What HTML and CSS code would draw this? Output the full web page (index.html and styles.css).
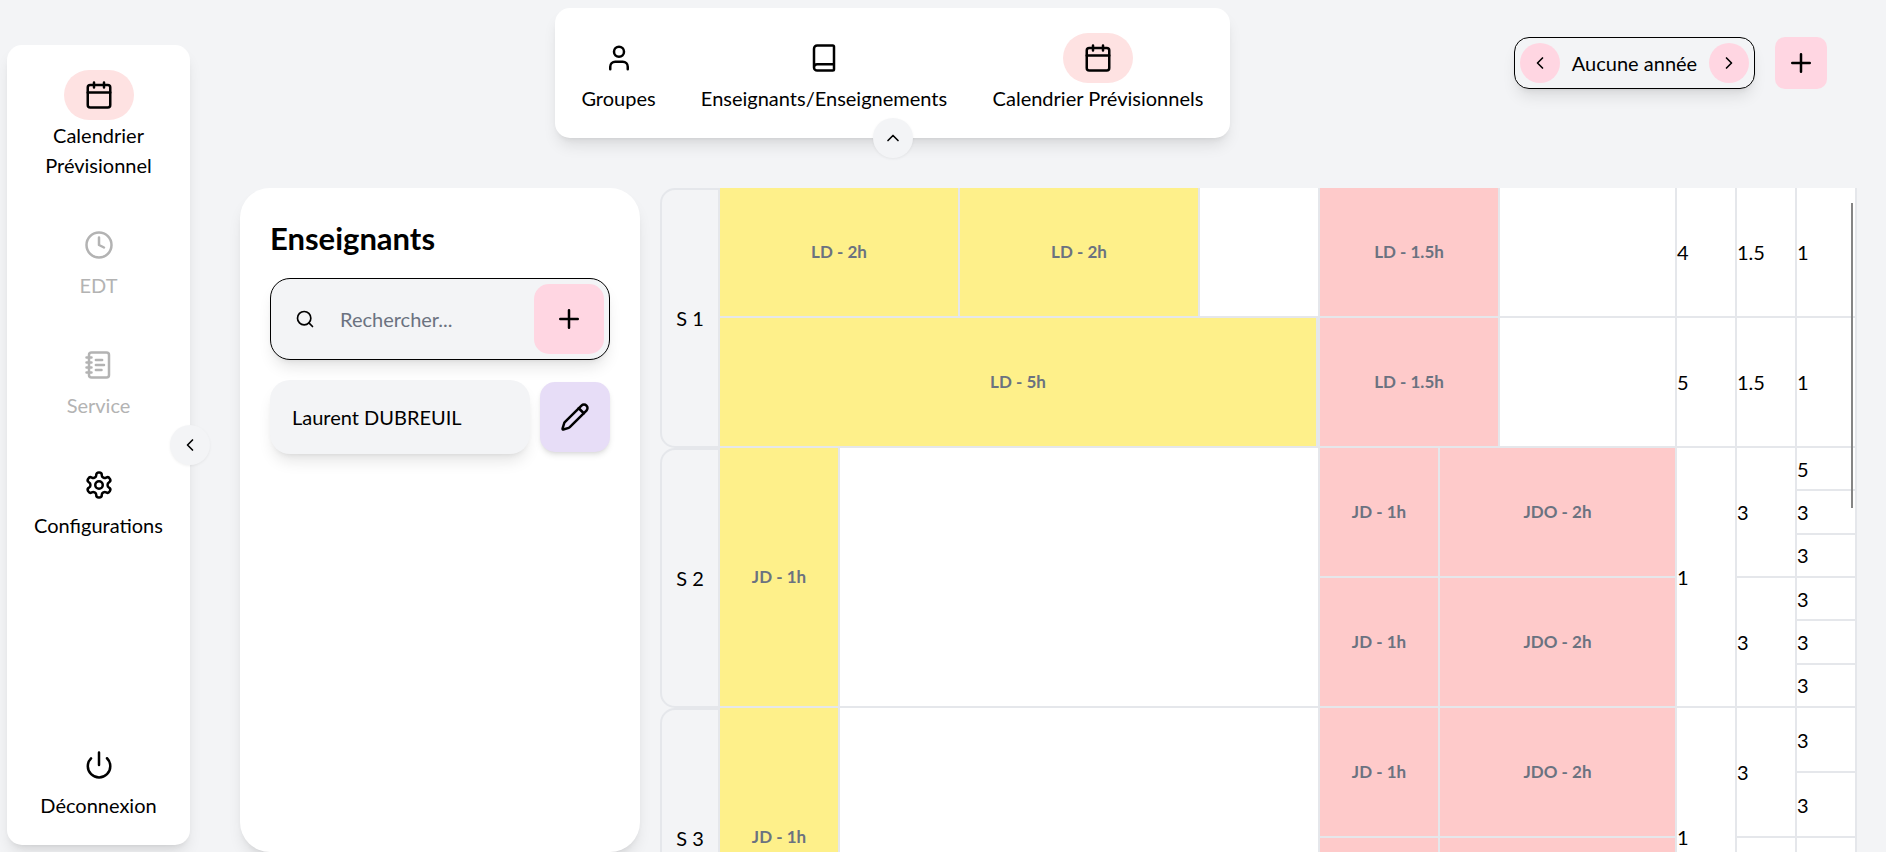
FILE: index.html
```html
<!DOCTYPE html>
<html lang="fr">
<head>
<meta charset="utf-8">
<meta name="viewport" content="width=device-width, initial-scale=1">
<title>Calendrier Prévisionnels</title>
<link rel="stylesheet" href="styles.css">
</head>
<body>
<svg class="sprite" aria-hidden="true">
  <symbol id="calendar" viewBox="0 0 24 24"><path d="M8 2v4M16 2v4M3 10h18"/><rect width="18" height="18" x="3" y="4" rx="2"/></symbol>
  <symbol id="clock" viewBox="0 0 24 24"><circle cx="12" cy="12" r="10"/><path d="M12 6v6l4 2"/></symbol>
  <symbol id="notebook" viewBox="0 0 24 24"><path d="M2 6h4M2 10h4M2 14h4M2 18h4M9.500 8h5M9.500 12H16M9.500 16H14"/><rect width="16" height="20" x="4" y="2" rx="2"/></symbol>
  <symbol id="settings" viewBox="0 0 24 24"><path d="M12.220 2h-.44a2 2 0 0 0-2 2v.18a2 2 0 0 1-1 1.730l-.43.25a2 2 0 0 1-2 0l-.15-.08a2 2 0 0 0-2.730.73l-.22.38a2 2 0 0 0 .73 2.730l.15.1a2 2 0 0 1 1 1.720v.51a2 2 0 0 1-1 1.740l-.15.09a2 2 0 0 0-.73 2.730l.22.38a2 2 0 0 0 2.730.73l.15-.08a2 2 0 0 1 2 0l.43.25a2 2 0 0 1 1 1.730V20a2 2 0 0 0 2 2h.44a2 2 0 0 0 2-2v-.18a2 2 0 0 1 1-1.730l.43-.25a2 2 0 0 1 2 0l.15.08a2 2 0 0 0 2.730-.73l.22-.39a2 2 0 0 0-.73-2.730l-.15-.08a2 2 0 0 1-1-1.740v-.5a2 2 0 0 1 1-1.740l.15-.09a2 2 0 0 0 .73-2.730l-.22-.38a2 2 0 0 0-2.730-.73l-.15.08a2 2 0 0 1-2 0l-.43-.25a2 2 0 0 1-1-1.730V4a2 2 0 0 0-2-2z"/><circle cx="12" cy="12" r="3"/></symbol>
  <symbol id="power" viewBox="0 0 24 24"><path d="M12 2v10M18.400 6.600a9 9 0 1 1-12.770.04"/></symbol>
  <symbol id="user" viewBox="0 0 24 24"><path d="M19 21v-2a4 4 0 0 0-4-4H9a4 4 0 0 0-4 4v2"/><circle cx="12" cy="7" r="4"/></symbol>
  <symbol id="book" viewBox="0 0 24 24"><path d="M4 19.500v-15A2.500 2.500 0 0 1 6.500 2H19a1 1 0 0 1 1 1v18a1 1 0 0 1-1 1H6.500a1 1 0 0 1 0-5H20"/></symbol>
  <symbol id="plus" viewBox="0 0 24 24"><path d="M5 12h14M12 5v14"/></symbol>
  <symbol id="left" viewBox="0 0 24 24"><path d="m15 18-6-6 6-6"/></symbol>
  <symbol id="right" viewBox="0 0 24 24"><path d="m9 18 6-6-6-6"/></symbol>
  <symbol id="up" viewBox="0 0 24 24"><path d="m18 15-6-6-6 6"/></symbol>
  <symbol id="search" viewBox="0 0 24 24"><circle cx="11" cy="11" r="8"/><path d="m21 21-4.300-4.300"/></symbol>
  <symbol id="pencil" viewBox="0 0 24 24"><path d="M21.174 6.812a1 1 0 0 0-3.986-3.987L3.842 16.174a2 2 0 0 0-.5.83l-1.321 4.352a.5.5 0 0 0 .623.622l4.353-1.320a2 2 0 0 0 .83-.497z"/><path d="m15 5 4 4"/></symbol>
</svg>

<aside class="sidebar">
  <nav class="side-nav" aria-label="Navigation principale">
    <a class="nav-item active" href="#"><span class="pill"><svg class="icon"><use href="#calendar"/></svg></span>Calendrier Prévisionnel</a>
    <a class="nav-item disabled" href="#" aria-disabled="true"><span class="pill"><svg class="icon"><use href="#clock"/></svg></span>EDT</a>
    <a class="nav-item disabled" href="#" aria-disabled="true"><span class="pill"><svg class="icon"><use href="#notebook"/></svg></span>Service</a>
    <a class="nav-item" href="#"><span class="pill"><svg class="icon"><use href="#settings"/></svg></span>Configurations</a>
  </nav>
  <a class="nav-item" href="#"><span class="pill"><svg class="icon"><use href="#power"/></svg></span>Déconnexion</a>
  <button class="round toggle toggle-side" aria-label="Replier le menu"><svg class="icon small"><use href="#left"/></svg></button>
</aside>

<div class="page">
  <header class="header">
    <nav class="top-nav" aria-label="Sections">
      <a class="nav-item" href="#"><span class="pill"><svg class="icon"><use href="#user"/></svg></span>Groupes</a>
      <a class="nav-item" href="#"><span class="pill"><svg class="icon"><use href="#book"/></svg></span>Enseignants/Enseignements</a>
      <a class="nav-item active" href="#"><span class="pill"><svg class="icon"><use href="#calendar"/></svg></span>Calendrier Prévisionnels</a>
      <button class="round toggle toggle-top" aria-label="Replier la barre"><svg class="icon small"><use href="#up"/></svg></button>
    </nav>
    <div class="year">
      <div class="year-picker">
        <button class="round pink" aria-label="Année précédente"><svg class="icon small"><use href="#left"/></svg></button>
        <span class="year-name">Aucune année</span>
        <button class="round pink" aria-label="Année suivante"><svg class="icon small"><use href="#right"/></svg></button>
      </div>
      <button class="year-add pink" aria-label="Ajouter une année"><svg class="icon"><use href="#plus"/></svg></button>
    </div>
  </header>

  <main class="content">
    <section class="teachers">
      <h1 class="title">Enseignants</h1>
      <div class="search">
        <label class="search-label" for="q"><svg class="icon small" role="img" aria-label="Rechercher"><use href="#search"/></svg></label>
        <input class="search-input" id="q" type="text" placeholder="Rechercher...">
        <button class="square pink" aria-label="Ajouter un enseignant"><svg class="icon"><use href="#plus"/></svg></button>
      </div>
      <div class="teacher">
        <div class="teacher-name">Laurent DUBREUIL</div>
        <button class="square violet" aria-label="Modifier Laurent DUBREUIL"><svg class="icon"><use href="#pencil"/></svg></button>
      </div>
    </section>

    <section class="planning" aria-label="Planning par semaine">
      <div class="weeks">
        <div class="week">
          <div class="week-label">S 1</div>
          <div class="col">
            <div class="row five"><div class="slot yellow span2">LD - 2h</div><div class="slot yellow span2">LD - 2h</div></div>
            <div class="row five"><div class="slot yellow span5">LD - 5h</div></div>
          </div>
          <div class="col">
            <div class="row six"><div class="slot rose span3">LD - 1.5h</div></div>
            <div class="row six"><div class="slot rose span3">LD - 1.5h</div></div>
          </div>
          <div class="col"><div class="total">4</div><div class="total">5</div></div>
          <div class="col"><div class="total">1.5</div><div class="total">1.5</div></div>
          <div class="col"><div class="total">1</div><div class="total">1</div></div>
        </div>
        <div class="week">
          <div class="week-label">S 2</div>
          <div class="col">
            <div class="row five"><div class="slot yellow">JD - 1h</div></div>
          </div>
          <div class="col">
            <div class="row six"><div class="slot rose span2">JD - 1h</div><div class="slot rose last span4">JDO - 2h</div></div>
            <div class="row six"><div class="slot rose span2">JD - 1h</div><div class="slot rose last span4">JDO - 2h</div></div>
          </div>
          <div class="col"><div class="total">1</div></div>
          <div class="col"><div class="total">3</div><div class="total">3</div></div>
          <div class="col"><div class="total">5</div><div class="total">3</div><div class="total">3</div><div class="total">3</div><div class="total">3</div><div class="total">3</div></div>
        </div>
        <div class="week">
          <div class="week-label">S 3</div>
          <div class="col">
            <div class="row five"><div class="slot yellow">JD - 1h</div></div>
          </div>
          <div class="col">
            <div class="row six"><div class="slot rose span2">JD - 1h</div><div class="slot rose last span4">JDO - 2h</div></div>
            <div class="row six"><div class="slot rose span2"></div><div class="slot rose last span4"></div></div>
          </div>
          <div class="col"><div class="total">1</div></div>
          <div class="col"><div class="total">3</div><div class="total"></div></div>
          <div class="col"><div class="total">3</div><div class="total">3</div><div class="total"></div><div class="total"></div></div>
        </div>
      </div>
      <div class="scroll-thumb"></div>
    </section>
  </main>
</div>
</body>
</html>
```

FILE: styles.css
```css
:root {
  --bg: #f3f4f6;
  --line: #e5e7eb;
  --pink: #ffd6e2;
  --shadow: 0 10px 15px -3px rgba(0, 0, 0, 0.1), 0 4px 6px -4px rgba(0, 0, 0, 0.1);
  --shadow-small: 0 1px 3px rgba(0, 0, 0, 0.06);
}

* { box-sizing: border-box; }

body {
  margin: 0;
  height: 100vh;
  display: flex;
  overflow: hidden;
  background: var(--bg);
  color: #000;
  font-family: Lato, "Open Sans", sans-serif;
  font-size: 20px;
  line-height: 30px;
}

button {
  display: flex;
  align-items: center;
  justify-content: center;
  flex: none;
  padding: 0;
  border: 0;
  color: inherit;
  font: inherit;
  cursor: pointer;
}

.sprite { display: none; }

.icon {
  width: 30px;
  height: 30px;
  display: block;
  fill: none;
  stroke: currentColor;
  stroke-width: 2;
  stroke-linecap: round;
  stroke-linejoin: round;
}

.small { width: 20px; height: 20px; }
.pink { background: var(--pink); }
.violet { background: #e7ddf7; box-shadow: 0 4px 6px -1px rgba(0, 0, 0, 0.1), 0 2px 4px -2px rgba(0, 0, 0, 0.1); }
.round { width: 40px; height: 40px; border-radius: 50%; }

/* Navigation */
.sidebar {
  position: relative;
  flex: none;
  width: 183px;
  margin: 45px 0 7px 7px;
  padding: 25px 20px;
  display: flex;
  flex-direction: column;
  justify-content: space-between;
  background: #fff;
  border-radius: 15px;
  box-shadow: var(--shadow);
}

.side-nav { display: flex; flex-direction: column; gap: 40px; }

.nav-item {
  display: flex;
  flex-direction: column;
  align-items: center;
  color: inherit;
  text-align: center;
  text-decoration: none;
}

.disabled { color: #b3b3b3; }

.pill {
  width: 70px;
  height: 50px;
  display: flex;
  align-items: center;
  justify-content: center;
  border-radius: 25px;
}

.active .pill { background: #fee2e2; }

.toggle { position: absolute; background: var(--bg); box-shadow: var(--shadow-small); }
.toggle-side { right: -20px; top: calc(50% - 20px); }
.toggle-top { bottom: -20px; left: calc(50% - 20px); }

.page {
  flex: 1;
  min-width: 0;
  display: flex;
  flex-direction: column;
  padding: 8px 29px 0 50px;
}

.header {
  display: flex;
  justify-content: space-between;
  align-items: flex-start;
  margin-bottom: 50px;
  padding: 0 30px 0 315px;
}

.top-nav {
  position: relative;
  display: grid;
  grid-template-columns: minmax(77px, auto) minmax(254px, auto) minmax(214px, auto);
  gap: 40px;
  padding: 25px;
  background: #fff;
  border-radius: 15px;
  box-shadow: var(--shadow);
}

.year { display: flex; gap: 20px; padding-top: 29px; }

.year-picker {
  display: flex;
  align-items: center;
  gap: 10px;
  padding: 5px;
  border: 1px solid #000;
  border-radius: 15px;
  box-shadow: var(--shadow);
}

.year-name { min-width: 129px; text-align: center; }
.year-add { width: 52px; height: 52px; border-radius: 10px; }

/* Teachers */
.content { flex: 1; min-height: 0; display: flex; gap: 20px; }

.teachers {
  flex: none;
  width: 400px;
  padding: 30px;
  background: #fff;
  border-radius: 30px;
  box-shadow: var(--shadow);
}

.title { margin: 0 0 20px; font-size: 31px; font-weight: 700; line-height: 40px; }

.search {
  display: flex;
  align-items: center;
  padding: 5px;
  border: 1px solid #000;
  border-radius: 20px;
  background: var(--bg);
  box-shadow: var(--shadow);
}

.search-label { padding: 0 20px 0 19px; }

.search-input {
  flex: 1;
  min-width: 0;
  padding: 0 5px;
  border: 0;
  outline: 0;
  background: none;
  color: inherit;
  font: inherit;
}

.search-input::placeholder { color: #6b7280; opacity: 1; }
.square { width: 70px; height: 70px; border-radius: 15px; }
.teacher { display: flex; align-items: center; gap: 10px; margin-top: 20px; }

.teacher-name {
  flex: 1;
  padding: 22px;
  border-radius: 20px;
  background: var(--bg);
  box-shadow: var(--shadow);
}

/* Planning */
.planning { position: relative; flex: 1; min-width: 0; }
.weeks { height: 100%; overflow-y: auto; scrollbar-width: none; }

.week {
  height: 260px;
  display: grid;
  grid-template-columns: 60px 600fr 357fr repeat(3, 60px);
}

.week-label {
  display: flex;
  align-items: center;
  justify-content: center;
  border: 2px solid var(--line);
  border-radius: 15px 0 0 15px;
}

.col {
  display: flex;
  flex-direction: column;
  min-width: 0;
  background: #fff;
  border-right: 2px solid var(--line);
}

.row, .total { flex: 1; border-bottom: 2px solid var(--line); }
.row { display: grid; }

/* The last track is narrower: it gives up the width of the column's border. */
.five { grid-template-columns: repeat(4, 120fr) 118fr; }
.six { grid-template-columns: repeat(5, 60fr) 55fr; }

.slot {
  display: flex;
  align-items: center;
  justify-content: center;
  min-width: 0;
  border-right: 2px solid var(--line);
  color: #6b7280;
  font-size: 17px;
  font-weight: 700;
}

.last { border-right: 0; }
.span2 { grid-column: span 2; }
.span3 { grid-column: span 3; }
.span4 { grid-column: span 4; }
.span5 { grid-column: span 5; }
.yellow { background: #fef08a; }
.rose { background: #fecaca; }
.total { display: flex; align-items: center; }

.scroll-thumb {
  position: absolute;
  top: 15px;
  right: 4px;
  width: 2px;
  height: 305px;
  background: #858585;
}
```
